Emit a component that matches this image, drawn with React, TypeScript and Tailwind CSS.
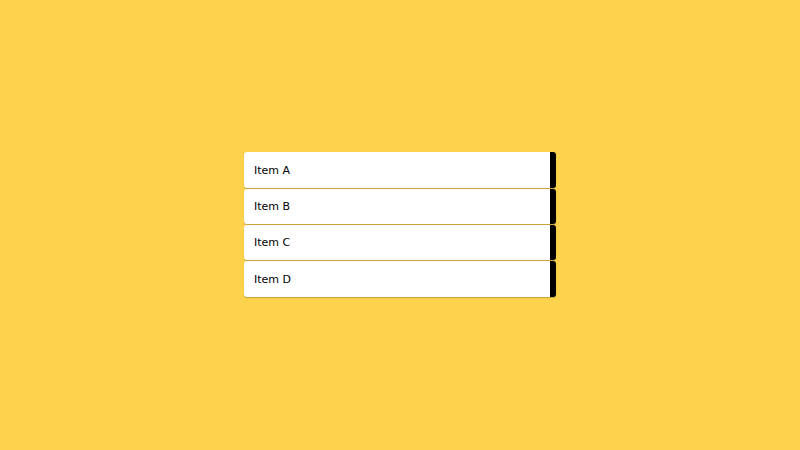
const items = ["Item A", "Item B", "Item C", "Item D"]

export default function App() {
  return (
    <div className="w-[800px] h-[450px] bg-[#fdd24d] flex items-center justify-center font-['DejaVu_Sans',sans-serif]">
      <ul className="w-[312px] flex flex-col">
        {items.map((item) => (
          <li
            key={item}
            className="h-[35.3px] mb-px flex items-center pl-[10px] pt-[2px] bg-white rounded-[3px] border-r-[6px] border-black shadow-[0_1px_1px_rgba(60,50,20,0.3)] text-[11px] text-black"
          >
            {item}
          </li>
        ))}
      </ul>
    </div>
  )
}
